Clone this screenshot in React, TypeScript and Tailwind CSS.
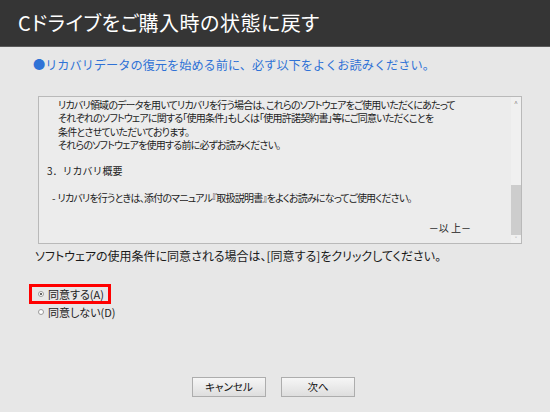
import React from 'react';

const jp = "[font-family:'Noto_Sans_CJK_JP','Noto_Sans',sans-serif]";

const lines: string[] = [
  'リカバリ領域のデータを用いてリカバリを行う場合は、これらのソフトウェアをご使用いただくにあたって',
  'それぞれのソフトウェアに関する「使用条件」もしくは「使用許諾契約書」等にご同意いただくことを',
  '条件とさせていただいております。',
  'それらのソフトウェアを使用する前に必ずお読みください。',
];

const Radio: React.FC<{ checked?: boolean; label: string }> = ({ checked = false, label }) => (
  <div className="flex items-center gap-[4px] h-[14px]">
    <span className="w-[6px] h-[6px] rounded-full border border-[#9a9a9a] bg-white flex items-center justify-center">
      {checked && <span className="w-[2px] h-[2px] rounded-full bg-[#333]" />}
    </span>
    <span className="text-[11px] text-[#222] leading-none">{label}</span>
  </div>
);

const Button: React.FC<{ label: string }> = ({ label }) => (
  <button className="w-[74px] h-[20px] border border-[#adadad] bg-gradient-to-b from-[#f6f6f6] to-[#dedede] text-[10.5px] text-[#111] leading-none">
    {label}
  </button>
);

export default function App() {
  return (
    <div className={`w-[550px] h-[412px] bg-[#e7e7e7] flex flex-col ${jp} [font-feature-settings:'palt']`}>
      <header className="h-[47px] bg-[#353535] border-b border-[#5a5a5a] flex items-center pl-[18px] shrink-0">
        <h1 className="text-[20px] text-white font-normal tracking-[0.5px]">Cドライブをご購入時の状態に戻す</h1>
      </header>

      <p className="mt-[10px] pl-[33px] text-[12.2px] leading-[16px] text-[#2f72d6] [font-feature-settings:normal]">
        ●リカバリデータの復元を始める前に、必ず以下をよくお読みください。
      </p>

      <div className="mt-[23px] ml-[38px] w-[484px] h-[148px] border border-[#b9b9b9] bg-[#ececec] flex">
        <div className="flex-1 overflow-hidden text-[10px] tracking-[-0.8px] leading-[13.3px] text-[#222] pt-[1px]">
          {lines.map((l) => (
            <div key={l} className="pl-[19px] whitespace-nowrap">{l}</div>
          ))}
          <div className="h-[13.3px]" />
          <div className="pl-[8px] [font-feature-settings:normal] tracking-[0px]">3．リカバリ概要</div>
          <div className="h-[13.3px]" />
          <div className="pl-[13px]">-&nbsp; リカバリを行うときは、添付のマニュアル『取扱説明書』をよくお読みになってご使用ください。</div>
          <div className="h-[13.3px]" />
          <div className="text-right pr-[40px] pt-[3px] tracking-[0px]">－以 上－</div>
        </div>
        <div className="w-[10px] bg-[#f0f0f0] flex flex-col items-center">
          <span className="h-[12px] text-[7px] text-[#888] leading-[12px]">^</span>
          <div className="flex-1 w-full flex flex-col justify-end">
            <div className="h-[50px] w-full bg-[#cdcdcd]" />
          </div>
          <span className="h-[8px] text-[7px] text-[#888] leading-[8px]">˅</span>
        </div>
      </div>

      <p className="mt-[4px] pl-[35px] text-[12px] leading-[16px] text-[#1a1a1a]">
        ソフトウェアの使用条件に同意される場合は、[同意する]をクリックしてください。
      </p>

      <div className="mt-[20px] ml-[29px] w-[82px] h-[20px] border-[3px] border-[#ff0000] flex items-center pl-[6px]">
        <Radio checked label="同意する(A)" />
      </div>
      <div className="ml-[38px] mt-[1px]">
        <Radio label="同意しない(D)" />
      </div>

      <div className="mt-[58px] flex gap-[15px] pl-[192px]">
        <Button label="キャンセル" />
        <Button label="次へ" />
      </div>
    </div>
  );
}
